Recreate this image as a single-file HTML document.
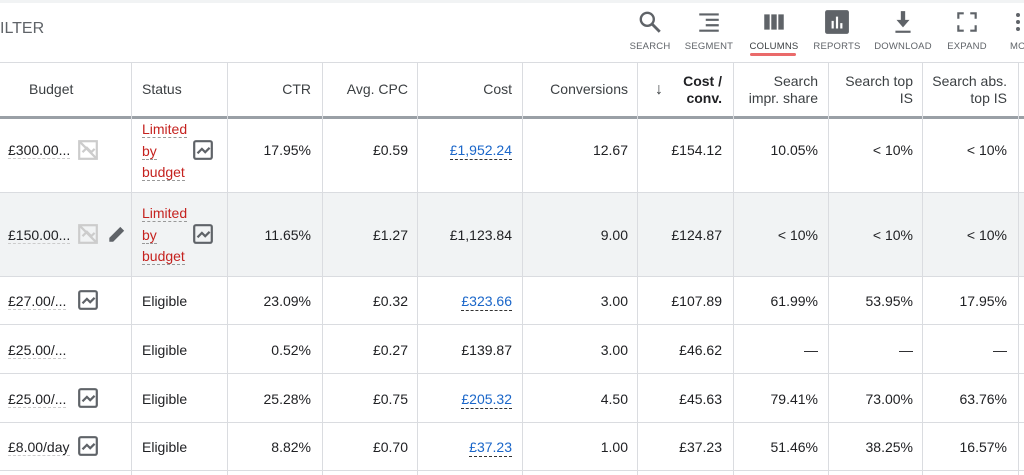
<!DOCTYPE html><html><head><style>
*{margin:0;padding:0;box-sizing:border-box}
body{width:1024px;height:475px;overflow:hidden;background:#fff;font-family:"Liberation Sans",Arial,sans-serif;color:#202124;position:relative}
.a{position:absolute}
.lbl{position:absolute;top:41px;font-size:9.5px;color:#5f6368;letter-spacing:.2px;transform:translateX(-50%);white-space:nowrap}
.ic{position:absolute;top:9px;transform:translateX(-50%)}
.v{position:absolute;top:63px;width:1px;height:412px;background:#dadce0}
.h{position:absolute;left:0;width:1024px;height:1px;background:#dadce0}
.t{position:absolute;font-size:14px;text-align:right;white-space:nowrap}
.hd{position:absolute;font-size:14px;color:#3c4043;text-align:right;line-height:17px}
.lk{color:#1a66c9;border-bottom:1px dashed #333;padding-bottom:1px}
.red{color:#c5221f;font-size:14px;line-height:21.5px}
.red span{border-bottom:1px dashed #999}
.bud{border-bottom:1px dashed #ccc}
</style></head><body>
<div class="a" style="left:0;top:0;width:1024px;height:3px;background:#f1f3f4"></div>
<div class="a" style="left:0;top:20px;font-size:16px;color:#5f6368">ILTER</div>
<svg class="ic" style="left:650px" width="26" height="26" viewBox="0 0 24 24"><circle cx="9.5" cy="9.5" r="6" fill="none" stroke="#5f6368" stroke-width="2.2"/><path d="M14 14l7 7" stroke="#5f6368" stroke-width="2.6"/></svg>
<svg class="ic" style="left:709px" width="26" height="26" viewBox="0 0 24 24"><path d="M3 5h18M9 10h12M9 15h12M3 20h18" stroke="#5f6368" stroke-width="2"/></svg>
<svg class="ic" style="left:774px" width="26" height="26" viewBox="0 0 24 24"><path d="M3 5h5v14H3zM9.5 5h5v14h-5zM16 5h5v14h-5z" fill="#5f6368"/></svg>
<svg class="ic" style="left:837px" width="26" height="26" viewBox="0 0 24 24"><rect x="1" y="1" width="22" height="22" rx="2" fill="#5f6368"/><path d="M8 11v7M12 7v11M16 13v5" stroke="#fff" stroke-width="2"/></svg>
<svg class="ic" style="left:903px" width="26" height="26" viewBox="0 0 24 24"><path d="M10 2h4v8h4l-6 7-6-7h4z" fill="#5f6368"/><path d="M5 21h14" stroke="#5f6368" stroke-width="2"/></svg>
<svg class="ic" style="left:967px" width="26" height="26" viewBox="0 0 24 24"><path d="M4 9V4h5M15 4h5v5M20 15v5h-5M9 20H4v-5" fill="none" stroke="#5f6368" stroke-width="2"/></svg>
<svg class="ic" style="left:1020px" width="10" height="26" viewBox="0 0 10 24"><circle cx="3" cy="5" r="2" fill="#5f6368"/><circle cx="3" cy="12" r="2" fill="#5f6368"/><circle cx="3" cy="19" r="2" fill="#5f6368"/></svg>
<div class="lbl" style="left:650px">SEARCH</div>
<div class="lbl" style="left:709px">SEGMENT</div>
<div class="lbl" style="left:774px;color:#3c4043">COLUMNS</div>
<div class="lbl" style="left:837px">REPORTS</div>
<div class="lbl" style="left:903px">DOWNLOAD</div>
<div class="lbl" style="left:967px">EXPAND</div>
<div class="lbl" style="left:1010px;transform:none">MO</div>
<div class="a" style="left:750px;top:53px;width:46px;height:3px;border-radius:2px;background:#ea6a6a"></div>
<div class="h" style="top:62px"></div>
<div class="a" style="left:0;top:192px;width:1024px;height:84px;background:#f1f3f4"></div>
<div class="a" style="left:0;top:116px;width:1024px;height:3px;background:#9aa0a6"></div>
<div class="h" style="top:192px"></div><div class="h" style="top:276px"></div><div class="h" style="top:324px"></div><div class="h" style="top:373px"></div><div class="h" style="top:422px"></div><div class="h" style="top:470px"></div>
<div class="v" style="left:131px"></div><div class="v" style="left:227px"></div><div class="v" style="left:322px"></div><div class="v" style="left:417px"></div><div class="v" style="left:522px"></div><div class="v" style="left:637px"></div><div class="v" style="left:733px"></div><div class="v" style="left:828px"></div><div class="v" style="left:922px"></div><div class="v" style="left:1018px"></div>
<div class="hd" style="left:29px;top:81px">Budget</div>
<div class="hd" style="left:142px;top:81px">Status</div>
<div class="hd" style="right:713px;top:81px">CTR</div>
<div class="hd" style="right:616px;top:81px">Avg. CPC</div>
<div class="hd" style="right:512px;top:81px">Cost</div>
<div class="hd" style="right:396px;top:81px">Conversions</div>
<div class="hd" style="left:655px;top:81px;font-size:16px">↓</div>
<div class="hd" style="right:302px;top:73px;font-weight:bold;color:#202124">Cost /<br>conv.</div>
<div class="hd" style="right:206px;top:73px">Search<br>impr. share</div>
<div class="hd" style="right:111px;top:73px">Search top<br>IS</div>
<div class="hd" style="right:17px;top:73px">Search abs.<br>top IS</div>
<svg width="0" height="0"><defs><symbol id="ch" viewBox="0 0 20 20"><rect x="2" y="2" width="16" height="16" rx="1.5" fill="none" stroke="#5f6368" stroke-width="2"/><path d="M5 13l4-4 3 3 4-4" fill="none" stroke="#5f6368" stroke-width="2"/></symbol><symbol id="nc" viewBox="0 0 20 20"><rect x="2" y="2" width="16" height="16" fill="none" stroke="#ccc" stroke-width="2"/><path d="M2 2l16 16M5 12l4-4 4 4 3-3" fill="none" stroke="#ccc" stroke-width="2"/></symbol></defs></svg>
<div class="t" style="left:8px;top:142px"><span class="bud">£300.00...</span></div>
<svg class="a" style="left:77px;top:139px" width="22" height="22"><use href="#nc"/></svg>
<div class="a red" style="left:142px;top:119px"><span>Limited</span><br><span>by</span><br><span>budget</span></div>
<svg class="a" style="left:192px;top:139px" width="22" height="22"><use href="#ch"/></svg>
<div class="t" style="right:713px;top:142px">17.95%</div>
<div class="t" style="right:616px;top:142px">£0.59</div>
<div class="t" style="right:512px;top:142px"><span class="lk">£1,952.24</span></div>
<div class="t" style="right:396px;top:142px">12.67</div>
<div class="t" style="right:302px;top:142px">£154.12</div>
<div class="t" style="right:206px;top:142px">10.05%</div>
<div class="t" style="right:111px;top:142px">&lt; 10%</div>
<div class="t" style="right:17px;top:142px">&lt; 10%</div>
<div class="t" style="left:8px;top:227px"><span class="bud">£150.00...</span></div>
<svg class="a" style="left:77px;top:223px" width="22" height="22"><use href="#nc"/></svg>
<svg class="a" style="left:106px;top:223px" width="22" height="22" viewBox="0 0 20 20"><path d="M3 17v-3.5L13 3.5l3.5 3.5L6.5 17z" fill="#5f6368"/></svg>
<div class="a red" style="left:142px;top:203px"><span>Limited</span><br><span>by</span><br><span>budget</span></div>
<svg class="a" style="left:192px;top:223px" width="22" height="22"><use href="#ch"/></svg>
<div class="t" style="right:713px;top:227px">11.65%</div>
<div class="t" style="right:616px;top:227px">£1.27</div>
<div class="t" style="right:512px;top:227px">£1,123.84</div>
<div class="t" style="right:396px;top:227px">9.00</div>
<div class="t" style="right:302px;top:227px">£124.87</div>
<div class="t" style="right:206px;top:227px">&lt; 10%</div>
<div class="t" style="right:111px;top:227px">&lt; 10%</div>
<div class="t" style="right:17px;top:227px">&lt; 10%</div>
<div class="t" style="left:8px;top:293px"><span class="bud">£27.00/...</span></div>
<svg class="a" style="left:77px;top:289px" width="22" height="22"><use href="#ch"/></svg>
<div class="t" style="left:142px;top:293px">Eligible</div>
<div class="t" style="right:713px;top:293px">23.09%</div>
<div class="t" style="right:616px;top:293px">£0.32</div>
<div class="t" style="right:512px;top:293px"><span class="lk">£323.66</span></div>
<div class="t" style="right:396px;top:293px">3.00</div>
<div class="t" style="right:302px;top:293px">£107.89</div>
<div class="t" style="right:206px;top:293px">61.99%</div>
<div class="t" style="right:111px;top:293px">53.95%</div>
<div class="t" style="right:17px;top:293px">17.95%</div>
<div class="t" style="left:8px;top:342px"><span class="bud">£25.00/...</span></div>
<div class="t" style="left:142px;top:342px">Eligible</div>
<div class="t" style="right:713px;top:342px">0.52%</div>
<div class="t" style="right:616px;top:342px">£0.27</div>
<div class="t" style="right:512px;top:342px">£139.87</div>
<div class="t" style="right:396px;top:342px">3.00</div>
<div class="t" style="right:302px;top:342px">£46.62</div>
<div class="t" style="right:206px;top:342px">—</div>
<div class="t" style="right:111px;top:342px">—</div>
<div class="t" style="right:17px;top:342px">—</div>
<div class="t" style="left:8px;top:391px"><span class="bud">£25.00/...</span></div>
<svg class="a" style="left:77px;top:387px" width="22" height="22"><use href="#ch"/></svg>
<div class="t" style="left:142px;top:391px">Eligible</div>
<div class="t" style="right:713px;top:391px">25.28%</div>
<div class="t" style="right:616px;top:391px">£0.75</div>
<div class="t" style="right:512px;top:391px"><span class="lk">£205.32</span></div>
<div class="t" style="right:396px;top:391px">4.50</div>
<div class="t" style="right:302px;top:391px">£45.63</div>
<div class="t" style="right:206px;top:391px">79.41%</div>
<div class="t" style="right:111px;top:391px">73.00%</div>
<div class="t" style="right:17px;top:391px">63.76%</div>
<div class="t" style="left:8px;top:439px"><span class="bud">£8.00/day</span></div>
<svg class="a" style="left:77px;top:435px" width="22" height="22"><use href="#ch"/></svg>
<div class="t" style="left:142px;top:439px">Eligible</div>
<div class="t" style="right:713px;top:439px">8.82%</div>
<div class="t" style="right:616px;top:439px">£0.70</div>
<div class="t" style="right:512px;top:439px"><span class="lk">£37.23</span></div>
<div class="t" style="right:396px;top:439px">1.00</div>
<div class="t" style="right:302px;top:439px">£37.23</div>
<div class="t" style="right:206px;top:439px">51.46%</div>
<div class="t" style="right:111px;top:439px">38.25%</div>
<div class="t" style="right:17px;top:439px">16.57%</div>
</body></html>
